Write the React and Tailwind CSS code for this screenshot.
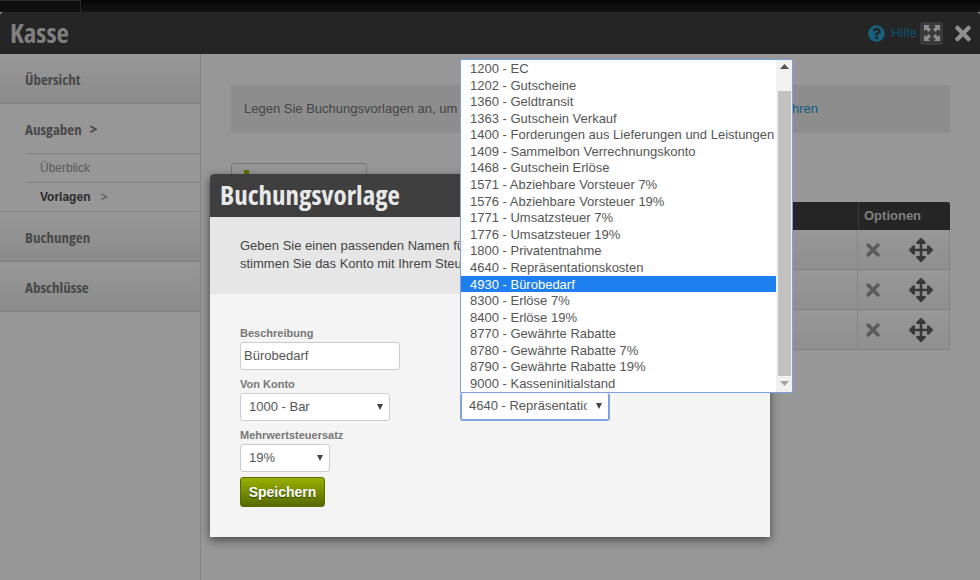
import React from 'react';
import { FaArrowsAlt, FaTimes, FaQuestionCircle } from 'react-icons/fa';

const accounts = [
  '1200 - EC',
  '1202 - Gutscheine',
  '1360 - Geldtransit',
  '1363 - Gutschein Verkauf',
  '1400 - Forderungen aus Lieferungen und Leistungen',
  '1409 - Sammelbon Verrechnungskonto',
  '1468 - Gutschein Erlöse',
  '1571 - Abziehbare Vorsteuer 7%',
  '1576 - Abziehbare Vorsteuer 19%',
  '1771 - Umsatzsteuer 7%',
  '1776 - Umsatzsteuer 19%',
  '1800 - Privatentnahme',
  '4640 - Repräsentationskosten',
  '4930 - Bürobedarf',
  '8300 - Erlöse 7%',
  '8400 - Erlöse 19%',
  '8770 - Gewährte Rabatte',
  '8780 - Gewährte Rabatte 7%',
  '8790 - Gewährte Rabatte 19%',
  '9000 - Kasseninitialstand',
];

const condensed = "font-['Open_Sans',sans-serif] font-bold [font-stretch:75%]";

function FullscreenIcon() {
  return (
    <svg width="16" height="16" viewBox="0 0 16 16" fill="#8f8f8f">
      <path d="M0 0h6L4.2 1.8 7 4.6 4.6 7 1.8 4.2 0 6z" />
      <path d="M16 0h-6l1.8 1.8L9 4.6 11.4 7l2.8-2.8L16 6z" />
      <path d="M0 16h6l-1.8-1.8L7 11.4 4.6 9l-2.8 2.8L0 10z" />
      <path d="M16 16h-6l1.8-1.8L9 11.4 11.4 9l2.8 2.8L16 10z" />
    </svg>
  );
}

function NavItem({ label }) {
  return (
    <div className="h-[50px] flex items-center pl-[25px] pt-[2px] border-b border-[#808080] bg-gradient-to-b from-[#979797] to-[#8b8b8b]">
      <span className={`${condensed} text-[15px] text-[#484848]`}>{label}</span>
    </div>
  );
}

function OptionRow() {
  return (
    <div className="h-10 flex border-b border-[#808080] bg-gradient-to-b from-[#979797] to-[#8f8f8f]">
      <div className="flex-1 border-r border-[#858585]" />
      <div className="w-[92px] flex items-center pl-[8px] gap-[29px] border-r border-[#858585]">
        <FaTimes className="w-[14px] h-[20px] text-[#5c5c5c]" />
        <FaArrowsAlt className="w-[24px] h-[24px] text-[#383838]" />
      </div>
    </div>
  );
}

function SelectBox({ value, className }) {
  return (
    <div className={`h-[28px] bg-white rounded-[3px] flex items-center pl-[8px] pr-[6px] ${className}`}>
      <span className="flex-1 min-w-0 overflow-hidden whitespace-nowrap text-[13px] text-[#555]">{value}</span>
      <svg width="6" height="6" viewBox="0 0 6 6" className="ml-[9px] shrink-0" fill="#444"><path d="M0 0h6L3 6z" /></svg>
    </div>
  );
}

function FormLabel({ children }) {
  return <div className="text-[11px] font-bold text-[#777] leading-[13px]">{children}</div>;
}

export default function App() {
  return (
    <div className="relative w-[980px] h-[580px] overflow-hidden bg-[#979797] font-['Liberation_Sans',Arial,sans-serif]">
      <div className="h-3 bg-gradient-to-b from-[#050505] to-[#161616]">
        <div className="w-[81px] h-full border-t border-r border-[#2a2a2a] bg-[#0f0f0f]" />
      </div>

      <div className="h-[42px] bg-[#252525] rounded-t-[4px] flex items-center pl-[10px] pr-[9px]">
        <span className={`${condensed} text-[27px] text-[#7f7f7f]`}>Kasse</span>
        <div className="flex-1" />
        <FaQuestionCircle className="w-[17px] h-[17px] text-[#17617f]" />
        <span className="ml-[6px] text-[13px] text-[#0f5170]">Hilfe</span>
        <div className="ml-[3px] w-[23px] h-[23px] bg-[#3a3a3a] rounded-[3px] flex items-center justify-center">
          <FullscreenIcon />
        </div>
        <FaTimes className="ml-[12px] w-[16px] h-[23px] text-[#8f8f8f]" />
      </div>

      <div className="flex h-[526px]">
        <div className="w-[201px] shrink-0 border-r border-[#858585]">
          <NavItem label="Übersicht" />
          <div className="h-[49px] flex items-center pl-[25px] pt-[1px]">
            <span className={`${condensed} text-[15px] text-[#484848]`}>Ausgaben</span>
            <span className={`${condensed} text-[16px] text-[#484848] ml-[8px]`}>&gt;</span>
          </div>
          <div className="ml-[25px] border-t border-[#858585] h-[29px] flex items-center pl-[15px] text-[12px] text-[#5a5a5a]">Überblick</div>
          <div className="ml-[25px] border-t border-[#858585] h-[29px] flex items-center pl-[15px] text-[12px] font-bold text-[#2b2b2b]">
            Vorlagen<span className="ml-[10px] font-normal text-[#555]">&gt;</span>
          </div>
          <div className="border-t border-[#858585]" />
          <NavItem label="Buchungen" />
          <NavItem label="Abschlüsse" />
        </div>

        <div className="flex-1 pt-[31px] pl-[30px] pr-[30px]">
          <div className="h-[48px] bg-[#8d8d8d] rounded-[2px] flex items-center pl-[13px] text-[13px] text-[#444]">
            <span>Legen Sie Buchungsvorlagen an, um</span>
            <div className="flex-1" />
            <span className="font-normal text-[#0f5a7c] mr-[132px]">hren</span>
          </div>
          <div className="mt-[30px] w-[136px] h-[30px] border border-[#777] rounded-[3px] flex pl-[12px] pt-[6px] gap-[6px] text-[13px] text-[#444]">
            <span className="w-[5px] h-[12px] bg-[#5f7000]" />
            Buchungsvorlage
          </div>
          <div className="mt-[9px] ml-[190px]">
            <div className="h-[28px] bg-[#252525] rounded-t-[2px] flex">
              <div className="flex-1" />
              <div className="w-[92px] border-l border-[#3a3a3a] flex items-center pl-[5px] text-[13px] font-bold text-[#7f7f7f]">Optionen</div>
            </div>
            <OptionRow />
            <OptionRow />
            <OptionRow />
          </div>
        </div>
      </div>

      {/* Modal */}
      <div className="absolute left-[210px] top-[174px] w-[560px] h-[363px] rounded-t-[4px] bg-[#f4f4f4] shadow-[0_3px_10px_rgba(0,0,0,0.55)]">
        <div className="h-[43px] bg-[#3f3f3f] rounded-t-[4px] flex items-center pl-[10px]">
          <span className={`${condensed} text-[27px] text-[#e8e8e8]`}>Buchungsvorlage</span>
        </div>
        <div className="h-[77px] bg-[#e6e6e6] pl-[30px] pt-[20px] text-[13px] leading-[18px] text-[#444]">
          <div>Geben Sie einen passenden Namen für</div>
          <div>stimmen Sie das Konto mit Ihrem Steuerberater ab.</div>
        </div>
        <div className="pl-[30px] pt-[33px]">
          <FormLabel>Beschreibung</FormLabel>
          <div className="mt-[2px] w-[160px] h-[28px] bg-white border border-[#ccc] rounded-[3px] flex items-center pl-[3px] text-[13px] text-[#555]">Bürobedarf</div>
          <div className="mt-[8px]"><FormLabel>Von Konto</FormLabel></div>
          <SelectBox value="1000 - Bar" className="mt-[2px] w-[150px] border border-[#ccc]" />
          <div className="mt-[8px]"><FormLabel>Mehrwertsteuersatz</FormLabel></div>
          <SelectBox value="19%" className="mt-[2px] w-[90px] border border-[#ccc]" />
          <button className="mt-[5px] w-[85px] h-[30px] rounded-[3px] border border-[#5b6b00] bg-gradient-to-b from-[#99b000] to-[#566b00] text-[14px] font-bold text-white [text-shadow:0_1px_1px_rgba(0,0,0,0.5)]">Speichern</button>
        </div>
      </div>

      {/* Open select and its list */}
      <SelectBox value="4640 - Repräsentationskosten" className="absolute left-[460px] top-[393px] w-[150px] border-2 border-t-0 border-[#7da2e0] !pl-[7px]" />
      <div className="absolute left-[460px] top-[59px] w-[333px] h-[334px] bg-white border border-[#7da2e0] flex text-[13px] text-[#555]">
        <div className="flex-1 min-w-0">
          {accounts.map((a) => (
            <div key={a} className={`h-[16.58px] leading-[18px] pl-[9px] whitespace-nowrap ${a.startsWith('4930') ? 'bg-[#1e7ff0] text-white' : ''}`}>{a}</div>
          ))}
        </div>
        <div className="w-[16px] bg-[#f1f1f1] flex flex-col items-center">
          <div className="h-[31px] pt-[4px]">
            <svg width="9" height="5" viewBox="0 0 9 5" fill="#505050"><path d="M4.5 0L9 5H0z" /></svg>
          </div>
          <div className="w-[13px] h-[285px] bg-[#c1c1c1]" />
          <div className="pt-[5px]">
            <svg width="9" height="5" viewBox="0 0 9 5" fill="#a3a3a3"><path d="M0 0h9L4.5 5z" /></svg>
          </div>
        </div>
      </div>
    </div>
  );
}
